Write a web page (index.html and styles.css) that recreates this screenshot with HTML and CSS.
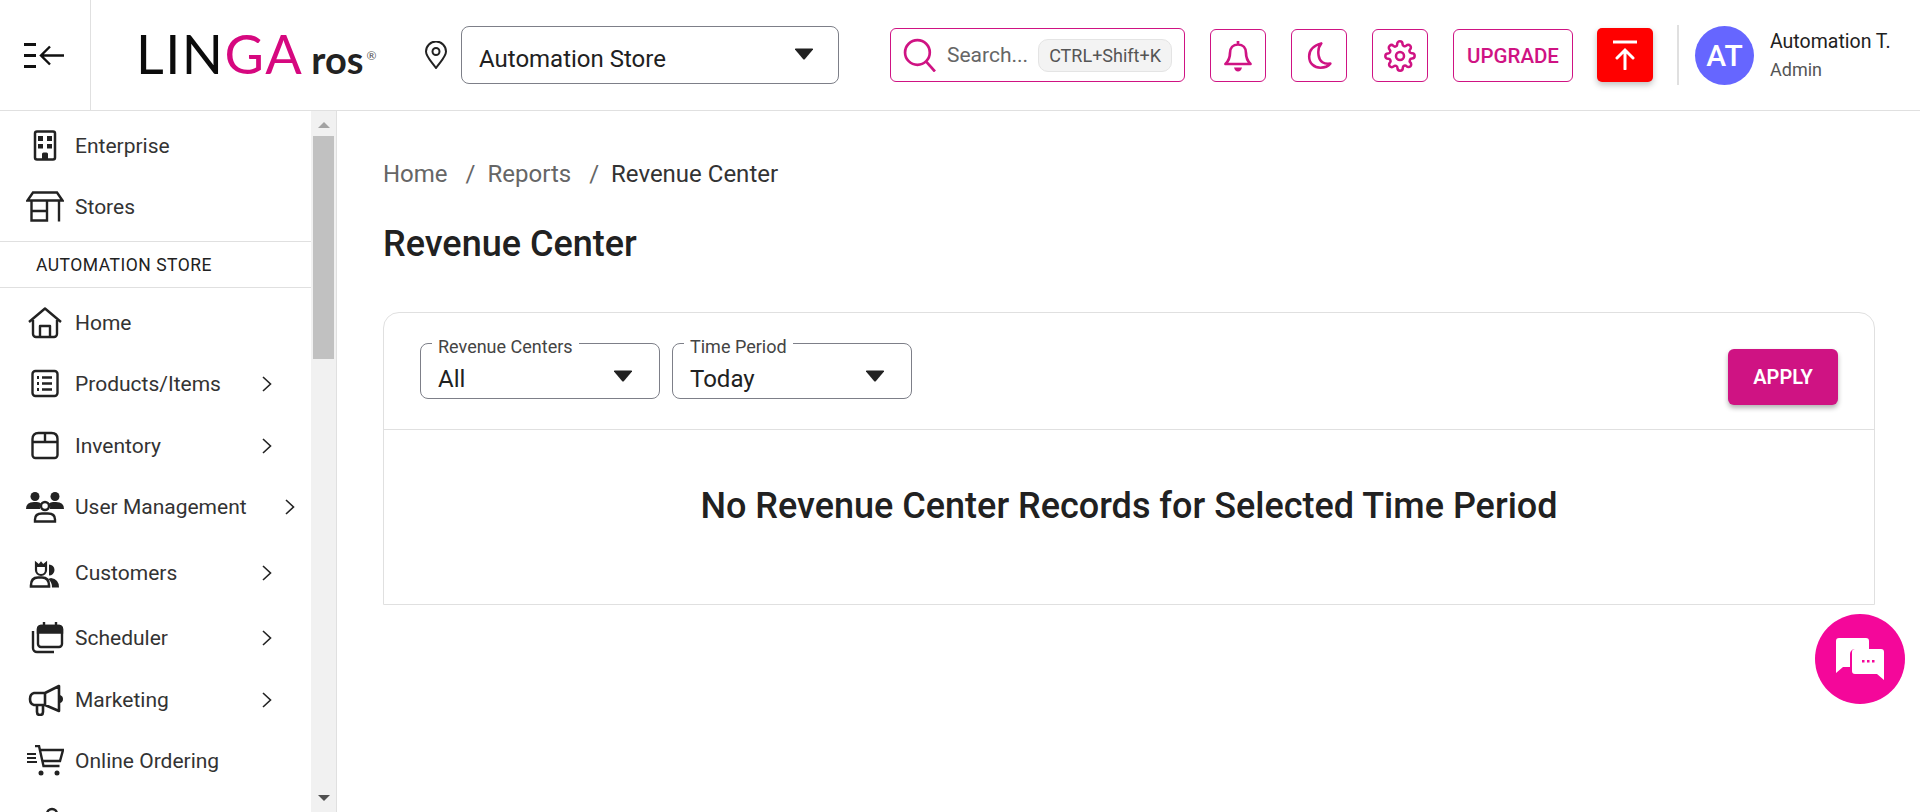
FILE: index.html
```html
<!DOCTYPE html>
<html lang="en">
<head>
  <meta charset="UTF-8">
  <title>Revenue Center</title>
  <link rel="stylesheet" href="styles.css">
</head>
<body>
  <header class="topbar">
    <div class="menu-cell">
      <svg width="40" height="25" viewBox="0 0 40 25" fill="none" stroke="#111" stroke-width="2.4">
        <path d="M0 1.5h12M0 12.5h12M0 23.500h12" stroke-width="3"/>
        <path d="M40 12.500H18M26 3.500l-9 9 9 9"/>
      </svg>
    </div>
    <div class="logo"><span class="logo-black">LIN</span><span class="logo-pink">GA</span><span class="logo-ros">ros</span><span class="logo-reg">®</span></div>
    <svg class="pin" width="22" height="28" viewBox="0 0 22 28" fill="none" stroke="#222" stroke-width="2">
      <path d="M11 27C6 20 1 15.500 1 10.500a10 10 0 0 1 20 0C21 15.500 16 20 11 27z"/>
      <circle cx="11" cy="10.500" r="3.500"/>
    </svg>
    <div class="store-select">
      <span>Automation Store</span>
      <svg class="caret" width="20" height="12" viewBox="0 0 20 12"><path d="M1 1.500q-.5-1 1-1h16q1.500 0 1 1l-8 9.500q-1 1-2 0z" fill="#212121"/></svg>
    </div>
    <div class="search">
      <svg width="34" height="34" viewBox="0 0 33 33" fill="none" stroke="#cf1383" stroke-width="2.600">
        <circle cx="14" cy="14" r="12"/><path d="M22.500 23l8.500 9.500"/>
      </svg>
      <span class="search-text">Search...</span>
      <span class="shortcut">CTRL+Shift+K</span>
    </div>
    <button class="tool">
      <svg width="28" height="32" viewBox="0 0 28 32" fill="none" stroke="#cf1383" stroke-width="2.700" stroke-linejoin="round">
        <path d="M14 1v3.500M14 4.500c-5 0-8 3.500-8 8.500 0 6-2 8.500-4.500 11h25C24 21.500 22 19 22 13c0-5-3-8.500-8-8.500z"/>
        <path d="M10 27.500h8q-1 4-4 4t-4-4z" fill="#cf1383" stroke="none"/>
      </svg>
    </button>
    <button class="tool">
      <svg width="25" height="27" viewBox="0 0 26 30" fill="none" stroke="#cf1383" stroke-width="2.800" stroke-linejoin="round">
        <path d="M15 1.500C6 4 1.500 9 1.500 16c0 8 6 12.500 12.500 12.500 5 0 9-2 11-4.500-7 1-12-2-13-9-.8-5 0-10 3-13.500z"/>
      </svg>
    </button>
    <button class="tool">
      <svg width="32" height="32" viewBox="0 0 24 24" fill="none" stroke="#cf1383" stroke-width="1.900" stroke-linejoin="round">
        <circle cx="12" cy="12" r="3"/>
        <path d="M19.400 15a1.650 1.650 0 0 0 .33 1.820l.06.06a2 2 0 1 1-2.830 2.830l-.06-.06a1.650 1.650 0 0 0-2.800 1.170V21a2 2 0 0 1-4 0v-.09a1.650 1.650 0 0 0-2.800-1.170l-.06.06a2 2 0 1 1-2.830-2.830l.06-.06a1.650 1.650 0 0 0-1.170-2.800H3a2 2 0 0 1 0-4h.09a1.650 1.650 0 0 0 1.170-2.800l-.06-.06a2 2 0 1 1 2.830-2.830l.06.06a1.650 1.650 0 0 0 2.800-1.170V3a2 2 0 0 1 4 0v.09a1.650 1.650 0 0 0 2.800 1.170l.06-.06a2 2 0 1 1 2.830 2.830l-.06.06a1.650 1.650 0 0 0 1.170 2.800H21a2 2 0 0 1 0 4h-.09a1.650 1.650 0 0 0-1.510 1.110z"/>
      </svg>
    </button>
    <button class="tool upgrade">UPGRADE</button>
    <button class="publish">
      <svg width="24" height="30" viewBox="0 0 24 30" fill="none" stroke="#fff" stroke-width="3" stroke-linecap="round">
        <path d="M0 2h24" stroke-linecap="butt"/><path d="M12 29V11M4 18l8-8 8 8"/>
      </svg>
    </button>
    <div class="user">
      <div class="avatar">AT</div>
      <div class="user-text">
        <div class="user-name">Automation T.</div>
        <div class="user-role">Admin</div>
      </div>
    </div>
  </header>

  <div class="page">
    <aside class="sidebar">
      <nav class="nav">
        <div class="nav-group">
          <a class="nav-row">
            <svg class="nav-icon" width="38" height="32" viewBox="0 0 38 32" fill="none" stroke="#222" stroke-width="2.500">
              <rect x="9" y="1.500" width="20" height="28" rx="2"/>
              <path d="M12 6h5v5h-5zM21 6h5v5h-5zM12 14h5v4.500h-5zM21 14h5v4.500h-5zM16 29v-5a1.500 1.500 0 0 1 1.500-1.500h3a1.500 1.500 0 0 1 1.500 1.500v5z" fill="#222" stroke="none"/>
            </svg>
            <span>Enterprise</span>
          </a>
          <a class="nav-row">
            <svg class="nav-icon" width="38" height="32" viewBox="0 0 38 32" fill="none" stroke="#222" stroke-width="2.400">
              <path d="M1.500 9.500L7 1.500h24l5.500 8zM5.500 9.500V29.500H21V9.500M5.500 20H21M33 9.500V30.500"/>
            </svg>
            <span>Stores</span>
          </a>
        </div>
        <div class="nav-section">AUTOMATION STORE</div>
        <div class="nav-group">
          <a class="nav-row">
            <svg class="nav-icon" width="38" height="32" viewBox="0 0 38 32" fill="none" stroke="#222" stroke-width="2.400" stroke-linejoin="round">
              <path d="M3 15L19 1.500 35 15M7 13v14a3 3 0 0 0 3 3h18a3 3 0 0 0 3-3V13"/>
              <path d="M14 30V19h10v11"/>
            </svg>
            <span>Home</span>
          </a>
          <a class="nav-row">
            <svg class="nav-icon" width="38" height="32" viewBox="0 0 38 32" fill="none" stroke="#222" stroke-width="2.400">
              <rect x="6.500" y="3" width="25" height="25" rx="3"/>
              <path d="M16 9.500h10M16 15.500h10M16 21.500h10" />
              <path d="M11 9.500h2M11 15.500h2M11 21.500h2" stroke-width="3"/>
            </svg>
            <span class="nav-label">Products/Items</span>
            <svg class="chevron" width="10" height="16" viewBox="0 0 10 16" fill="none" stroke="#222" stroke-width="1.600"><path d="M1 1l7.500 7L1 15"/></svg>
          </a>
          <a class="nav-row">
            <svg class="nav-icon" width="38" height="32" viewBox="0 0 38 32" fill="none" stroke="#222" stroke-width="2.400">
              <path d="M6.500 12V9q0-6 6-6h13q6 0 6 6v3M6.500 12v13a3 3 0 0 0 3 3h19a3 3 0 0 0 3-3V12zM19 3v9"/>
            </svg>
            <span class="nav-label">Inventory</span>
            <svg class="chevron" width="10" height="16" viewBox="0 0 10 16" fill="none" stroke="#222" stroke-width="1.600"><path d="M1 1l7.500 7L1 15"/></svg>
          </a>
          <a class="nav-row">
            <svg class="nav-icon" width="38" height="32" viewBox="0 0 38 32" fill="none" stroke="#222" stroke-width="2.400">
              <g fill="#222" stroke="none">
                <circle cx="9" cy="5.500" r="4.500"/><circle cx="29" cy="5.500" r="4.500"/>
                <path d="M0 18q0-7 8-7h3q2.500 0 4 1.500-2 3-1 5.500zM38 18q0-7-8-7h-3q-2.500 0-4 1.500 2 3 1 5.500z"/>
              </g>
              <circle cx="19" cy="15" r="4"/>
              <path d="M9 30.500v-2q0-6 7-6h6q7 0 7 6v2z"/>
            </svg>
            <span class="nav-label">User Management</span>
            <svg class="chevron chevron-far" width="10" height="16" viewBox="0 0 10 16" fill="none" stroke="#222" stroke-width="1.600"><path d="M1 1l7.500 7L1 15"/></svg>
          </a>
          <a class="nav-row nav-row-gap">
            <svg class="nav-icon" width="38" height="32" viewBox="0 0 38 32" fill="none" stroke="#222" stroke-width="2.400">
              <path d="M10 6l3 2.500L15 6l2 2.500L20 6v7a5 5 0 0 1-10 0z" stroke-width="2.200"/>
              <path d="M10 7h10v3H10z" fill="#222" stroke="none"/>
              <path d="M23 7.500a5.500 5.500 0 0 1 0 11zM25 21q8 1 8 9.500h-7q0-6-4-8.500z" fill="#222" stroke="none"/>
              <path d="M5 29.500v-1q0-8 7-8h4q7 0 7 8v1z" stroke-width="2.600"/>
            </svg>
            <span class="nav-label">Customers</span>
            <svg class="chevron" width="10" height="16" viewBox="0 0 10 16" fill="none" stroke="#222" stroke-width="1.600"><path d="M1 1l7.500 7L1 15"/></svg>
          </a>
          <a class="nav-row nav-row-gap">
            <svg class="nav-icon" width="38" height="32" viewBox="0 0 38 32" fill="none" stroke="#222" stroke-width="2.400">
              <rect x="12" y="4" width="24" height="21" rx="3"/>
              <path d="M12 10.500h24V7a3 3 0 0 0-3-3H15a3 3 0 0 0-3 3z" fill="#222"/>
              <path d="M18 0v5M30 0v5"/>
              <path d="M7 9v17a4 4 0 0 0 4 4h17"/>
            </svg>
            <span class="nav-label">Scheduler</span>
            <svg class="chevron" width="10" height="16" viewBox="0 0 10 16" fill="none" stroke="#222" stroke-width="1.600"><path d="M1 1l7.500 7L1 15"/></svg>
          </a>
          <a class="nav-row">
            <svg class="nav-icon" width="38" height="32" viewBox="0 0 38 32" fill="none" stroke="#222" stroke-width="2.600" stroke-linejoin="round">
              <path d="M8 9h11L33 2v25l-14-6H8q-4-1-4-6t4-6zM19 9v12M11 21v7q0 3 3 3t3-3v-7"/>
              <path d="M34 11q3 1 3 4t-3 4" fill="#222" stroke="none"/>
            </svg>
            <span class="nav-label">Marketing</span>
            <svg class="chevron" width="10" height="16" viewBox="0 0 10 16" fill="none" stroke="#222" stroke-width="1.600"><path d="M1 1l7.500 7L1 15"/></svg>
          </a>
          <a class="nav-row">
            <svg class="nav-icon" width="38" height="32" viewBox="0 0 38 32" fill="none" stroke="#222" stroke-width="2.400">
              <path d="M9 1h4l4.500 20h16M14 5h23l-3 11H17"/>
              <path d="M1 9h9M1 13h9M1 17h10" stroke-width="2"/>
              <circle cx="15" cy="28" r="2.500" fill="#222" stroke="none"/>
              <circle cx="31" cy="28" r="2.500" fill="#222" stroke="none"/>
            </svg>
            <span class="nav-label">Online Ordering</span>
          </a>
          <a class="nav-row">
            <svg class="nav-icon" width="38" height="32" viewBox="0 0 38 32" fill="none" stroke="#222" stroke-width="2.400">
              <circle cx="26" cy="7" r="5"/><path d="M22 11L8 25v6"/>
            </svg>
          </a>
        </div>
      </nav>
      <div class="scrollbar">
        <div class="scroll-arrow scroll-up"></div>
        <div class="scroll-track"><div class="scroll-thumb"></div></div>
        <div class="scroll-arrow scroll-down"></div>
      </div>
    </aside>

    <main class="content">
      <div class="crumbs">
        <span class="crumb">Home</span>
        <span class="crumb-sep">/</span>
        <span class="crumb">Reports</span>
        <span class="crumb-sep">/</span>
        <span class="crumb-now">Revenue Center</span>
      </div>
      <h1 class="title">Revenue Center</h1>

      <section class="card">
        <div class="card-head">
          <fieldset class="field">
            <legend>Revenue Centers</legend>
            <div class="field-value">
              <span>All</span>
              <svg width="20" height="12" viewBox="0 0 20 12"><path d="M1 1.500q-.5-1 1-1h16q1.500 0 1 1l-8 9.500q-1 1-2 0z" fill="#212121"/></svg>
            </div>
          </fieldset>
          <fieldset class="field">
            <legend>Time Period</legend>
            <div class="field-value">
              <span>Today</span>
              <svg width="20" height="12" viewBox="0 0 20 12"><path d="M1 1.500q-.5-1 1-1h16q1.500 0 1 1l-8 9.500q-1 1-2 0z" fill="#212121"/></svg>
            </div>
          </fieldset>
          <button class="apply">APPLY</button>
        </div>
        <div class="card-body">No Revenue Center Records for Selected Time Period</div>
      </section>
    </main>
  </div>

  <button class="chat">
    <svg width="48" height="42" viewBox="0 0 48 42">
      <path d="M3 0h27a3 3 0 0 1 3 3v8H19a5 5 0 0 0-5 5v13H7l-7 6V3a3 3 0 0 1 3-3z" fill="#fff"/>
      <path d="M19 11h26a3 3 0 0 1 3 3v28l-7-6H19a3 3 0 0 1-3-3V14a3 3 0 0 1 3-3z" fill="#fff"/>
      <path d="M26 22h2.500v2.500H26zM31 22h2.500v2.500H31zM36 22h2.500v2.500H36z" fill="#f4079a"/>
    </svg>
  </button>
</body>
</html>
```

FILE: styles.css
```css
:root {
  --pink: #cf1383;
  --text: #212121;
  --muted: #666;
  --line: #e0e0e0;
  --field: #7d7f88;
}

* {
  box-sizing: border-box;
}

html, body {
  height: 100%;
}

body {
  margin: 0;
  overflow: hidden;
  color: var(--text);
  background: #fff;
  font-family: Roboto, "Liberation Sans", sans-serif;
}

button {
  font-family: inherit;
  cursor: pointer;
}

/* top bar */
.topbar {
  display: flex;
  align-items: center;
  height: 111px;
  border-bottom: 1px solid var(--line);
}

.menu-cell {
  display: flex;
  align-items: center;
  justify-content: center;
  width: 91px;
  height: 100%;
  padding-right: 3px;
  border-right: 1px solid var(--line);
}

.logo {
  display: flex;
  align-items: baseline;
  width: 334px;
  padding: 0 0 2px 45px;
  font-family: Lato, sans-serif;
}

.logo-black, .logo-pink {
  font-size: 54px;
  line-height: 1;
  letter-spacing: 1.500px;
}

.logo-black {
  color: #0b0b0b;
}

.logo-pink {
  color: #d6087f;
}

.logo-ros {
  margin-left: 8px;
  font-size: 38px;
  line-height: 1;
  font-weight: 700;
  color: #222;
}

.logo-reg {
  align-self: flex-start;
  margin: 21px 0 0 3px;
  font-size: 12px;
  color: #555;
}

.pin {
  flex: none;
}

.store-select {
  display: flex;
  align-items: center;
  justify-content: space-between;
  width: 378px;
  height: 58px;
  margin-left: 14px;
  padding: 8px 24px 0 17px;
  border: 1px solid var(--field);
  border-radius: 8px;
  font-size: 24px;
}

.caret {
  margin-top: -10px;
}

.search {
  display: flex;
  align-items: center;
  width: 295px;
  height: 54px;
  margin-left: 51px;
  padding: 0 12px 0 12px;
  border: 1px solid var(--pink);
  border-radius: 6px;
}

.search-text {
  margin-left: 10px;
  font-size: 21px;
  color: var(--muted);
}

.shortcut {
  margin-left: auto;
  padding: 5px 10px;
  border: 1px solid #e4e4e4;
  border-radius: 10px;
  background: #f3f3f3;
  font-size: 18px;
  color: #555;
}

.tool {
  display: flex;
  align-items: center;
  justify-content: center;
  flex: none;
  width: 56px;
  height: 53px;
  margin: 1px 0 0 25px;
  padding: 0;
  border: 1px solid var(--pink);
  border-radius: 6px;
  background: #fff;
}

.upgrade {
  width: 120px;
  font-size: 20.500px;
  font-weight: 500;
  color: var(--pink);
}

.publish {
  display: flex;
  align-items: center;
  justify-content: center;
  width: 56px;
  height: 54px;
  margin-left: 24px;
  border: none;
  border-radius: 5px;
  background: #f00;
  box-shadow: 0 3px 6px rgba(0, 0, 0, .25);
}

.user {
  display: flex;
  align-items: center;
  height: 60px;
  margin-left: 24px;
  padding-left: 16px;
  border-left: 2px solid var(--line);
}

.avatar {
  display: flex;
  align-items: center;
  justify-content: center;
  width: 59px;
  height: 59px;
  border-radius: 50%;
  background: #6666ff;
  color: #fff;
  font-size: 30px;
  font-weight: 500;
}

.user-text {
  margin-left: 16px;
}

.user-name {
  font-size: 19.500px;
  line-height: 28px;
}

.user-role {
  margin-top: 2px;
  font-size: 18px;
  line-height: 24px;
  color: #555;
}

/* sidebar */
.page {
  display: flex;
  height: 701px;
}

.sidebar {
  display: flex;
  flex: none;
  width: 337px;
  height: 100%;
  border-right: 1px solid var(--line);
}

.nav {
  flex: 1;
  min-width: 0;
  overflow: hidden;
  color: #333;
}

.nav-group {
  padding-top: 4px;
}

.nav-row {
  display: flex;
  align-items: center;
  height: 61.500px;
  padding-left: 26px;
  font-size: 21px;
}

.nav-row-gap {
  margin-top: 4px;
}

.nav-icon {
  flex: none;
  margin-right: 11px;
}

.nav-label {
  min-width: 171px;
}

.chevron {
  margin-left: 16px;
}

.chevron-far {
  margin-left: 38px;
}

.nav-section {
  height: 47px;
  margin-top: 3px;
  padding-left: 36px;
  border-top: 1px solid var(--line);
  border-bottom: 1px solid var(--line);
  font-size: 17.500px;
  line-height: 47px;
  letter-spacing: .5px;
  color: var(--text);
}

.scrollbar {
  display: flex;
  flex-direction: column;
  align-items: center;
  flex: none;
  width: 25px;
  background: #f1f1f1;
}

.scroll-arrow {
  flex: none;
  width: 0;
  height: 0;
  border-left: 6px solid transparent;
  border-right: 6px solid transparent;
}

.scroll-up {
  margin: 11px 0 8px;
  border-bottom: 6px solid #a3a3a3;
}

.scroll-down {
  margin: 7px 0 11px;
  border-top: 6px solid #505050;
}

.scroll-track {
  flex: 1;
  width: 100%;
  padding: 0 2px;
}

.scroll-thumb {
  height: 223px;
  background: #c1c1c1;
}

/* main */
.content {
  flex: 1;
  min-width: 0;
  padding: 49px 45px 0 46px;
}

.crumbs {
  display: flex;
  align-items: center;
  font-size: 24px;
  line-height: 28px;
}

.crumb, .crumb-sep {
  color: var(--muted);
}

.crumb-sep {
  margin: 0 12px 0 18px;
}

.crumb-now {
  color: #333;
}

.title {
  margin: 34px 0 0;
  font-size: 36px;
  font-weight: 500;
  line-height: 44px;
}

.card {
  margin-top: 46px;
  border: 1px solid var(--line);
  border-radius: 16px 16px 0 0;
}

.card-head {
  display: flex;
  align-items: flex-start;
  gap: 12px;
  height: 117px;
  padding: 16px 36px 0;
  border-bottom: 1px solid var(--line);
}

.field {
  width: 240px;
  height: 70px;
  margin: 0;
  padding: 0 17px;
  border: 1px solid var(--field);
  border-radius: 8px;
}

.field legend {
  margin-left: -6px;
  padding: 8px 6px 0;
  font-size: 18px;
  line-height: 20px;
  color: #444;
}

.field-value {
  display: flex;
  align-items: center;
  justify-content: space-between;
  margin-top: 3px;
  padding-right: 9px;
  font-size: 24px;
  line-height: 38px;
}

.field-value svg {
  margin-top: -6px;
}

.apply {
  width: 110px;
  height: 56px;
  margin: 20px 0 0 auto;
  padding: 0;
  border: none;
  border-radius: 6px;
  background: var(--pink);
  box-shadow: 0 3px 5px rgba(0, 0, 0, .3);
  color: #fff;
  font-size: 20px;
  font-weight: 600;
}

.card-body {
  display: flex;
  align-items: center;
  justify-content: center;
  height: 174px;
  padding-bottom: 22px;
  font-size: 36px;
  font-weight: 500;
}

/* floating chat button */
.chat {
  position: fixed;
  left: 1815px;
  top: 614px;
  display: flex;
  align-items: center;
  justify-content: center;
  width: 90px;
  height: 90px;
  padding: 0;
  border: none;
  border-radius: 50%;
  background: #f4079a;
}
```
